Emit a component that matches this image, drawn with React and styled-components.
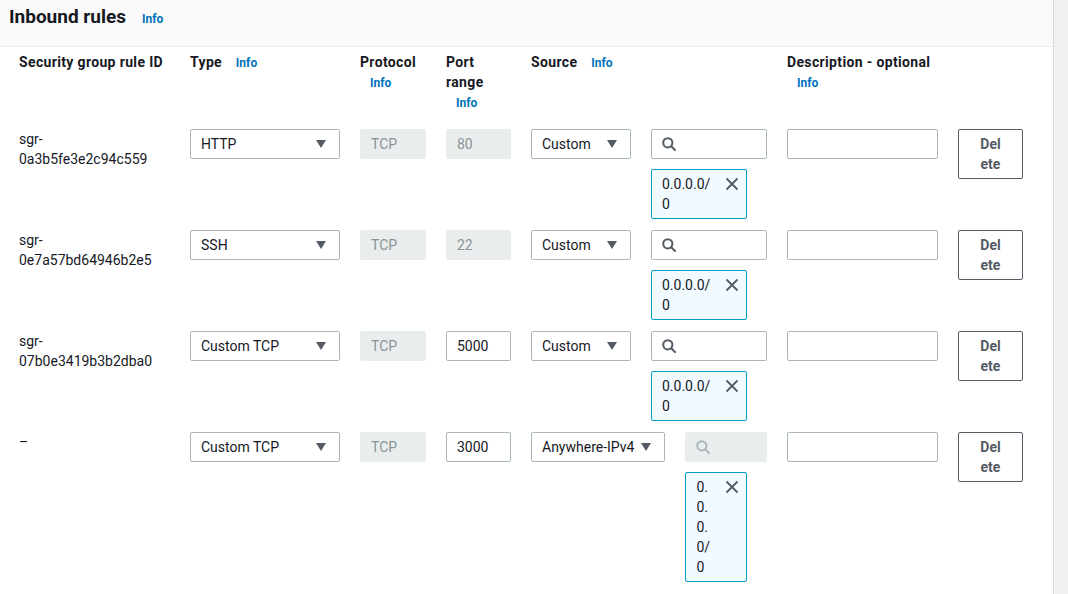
import React from "react";
import styled, { createGlobalStyle } from "styled-components";

const GlobalStyle = createGlobalStyle`
  html, body {
    margin: 0;
    padding: 0;
    background: #fff;
  }
  body {
    font-family: Roboto, "Liberation Sans", Arial, sans-serif;
    font-size: 14px;
    line-height: 20px;
    color: #16191f;
  }
  * {
    box-sizing: border-box;
  }
`;

const Page = styled.div`
  display: flex;
  width: 1068px;
  height: 594px;
  overflow: hidden;
`;

const Main = styled.div`
  flex: 1;
  min-width: 0;
`;

const Scrollbar = styled.div`
  width: 15px;
  flex-shrink: 0;
  background: #f1f1f1;
  border-left: 1px solid #d9d9d9;
`;

const PanelHeader = styled.div`
  height: 47px;
  padding: 6px 9px 0;
  display: flex;
  align-items: baseline;
  background: #fafafa;
  border-bottom: 1px solid #eaeded;
`;

const Heading = styled.h2`
  margin: 0;
  font-size: 19px;
  line-height: 22px;
  font-weight: 700;
`;

const InfoLink = styled.a`
  display: inline-block;
  margin-left: ${(p) => p.$gap ?? 10}px;
  font-size: 12px;
  font-weight: 700;
  letter-spacing: 0;
  color: #0073bb;
  text-decoration: none;
`;

const Table = styled.div`
  padding: 5px 19px 0;
`;

const Grid = styled.div`
  display: grid;
  grid-template-columns: 151px 150px 66px 65px 236px 151px 65px;
  column-gap: 20px;
  align-items: start;
`;

const HeaderRow = styled(Grid)`
  margin-bottom: 16px;
`;

const ColTitle = styled.div`
  font-weight: 700;
  letter-spacing: 0.35px;
`;

const Rows = styled.div`
  display: flex;
  flex-direction: column;
  gap: 11px;
`;

const RuleId = styled.div`
  line-height: 20px;
`;

const Select = styled.div`
  display: flex;
  align-items: center;
  justify-content: space-between;
  gap: 7px;
  height: 30px;
  min-width: ${(p) => p.$minWidth || 0}px;
  padding: 0 13px 0 10px;
  flex-shrink: 0;
  white-space: nowrap;
  background: #fff;
  border: 1px solid #aab7b8;
  border-radius: 2px;
`;

const Field = styled.div`
  display: flex;
  align-items: center;
  gap: 8px;
  height: 30px;
  padding: 0 10px;
  background: ${(p) => (p.$disabled ? "#eaeded" : "#fff")};
  color: ${(p) => (p.$disabled ? "#879596" : "#16191f")};
  border: 1px solid ${(p) => (p.$disabled ? "#eaeded" : "#aab7b8")};
  border-radius: 2px;
`;

const SourceCell = styled.div`
  display: flex;
  align-items: flex-start;
  gap: 20px;
`;

const SearchCol = styled.div`
  flex: 1;
  min-width: 0;
  display: flex;
  flex-direction: column;
  gap: 10px;
`;

const Token = styled.div`
  margin-right: 20px;
  display: flex;
  align-items: flex-start;
  gap: 11px;
  padding: 4px 6px 4px 10px;
  background: #f1faff;
  border: 1px solid #00a1c9;
  border-radius: 2px;
`;

const TokenText = styled.span`
  flex: 1;
  min-width: 0;
  word-break: break-all;
`;

const Dismiss = styled.span`
  display: flex;
  align-items: center;
  height: 20px;
  flex-shrink: 0;
`;

const DeleteButton = styled.button`
  width: 65px;
  padding: 4px 20px;
  background: #fff;
  border: 1px solid #545b64;
  border-radius: 2px;
  color: #545b64;
  font-family: Roboto, "Liberation Sans", Arial, sans-serif;
  font-size: 14px;
  font-weight: 700;
  line-height: 20px;
  text-align: center;
  word-break: break-all;
`;

const Caret = () => (
  <svg width="10" height="8" viewBox="0 0 10 8">
    <polygon points="0,0 10,0 5,8" fill="#545b64" />
  </svg>
);

const SearchIcon = ({ color }) => (
  <svg width="14" height="14" viewBox="0 0 14 14" fill="none">
    <circle cx="5.8" cy="5.8" r="4.6" stroke={color} strokeWidth="2" />
    <line x1="9.2" y1="9.2" x2="13" y2="13" stroke={color} strokeWidth="2" strokeLinecap="round" />
  </svg>
);

const CloseIcon = () => (
  <svg width="16" height="16" viewBox="0 0 16 16" fill="none">
    <path d="M2.5 2.5l11 11M13.5 2.5l-11 11" stroke="#545b64" strokeWidth="1.8" />
  </svg>
);

const rules = [
  { id: ["sgr-", "0a3b5fe3e2c94c559"], type: "HTTP", port: "80", portLocked: true, source: "Custom" },
  { id: ["sgr-", "0e7a57bd64946b2e5"], type: "SSH", port: "22", portLocked: true, source: "Custom" },
  { id: ["sgr-", "07b0e3419b3b2dba0"], type: "Custom TCP", port: "5000", source: "Custom" },
  { id: ["–"], type: "Custom TCP", port: "3000", source: "Anywhere-IPv4", searchLocked: true },
];

function RuleRow({ rule }) {
  return (
    <Grid>
      <RuleId>
        {rule.id[0]}
        {rule.id[1] && (
          <>
            <wbr />
            {rule.id[1]}
          </>
        )}
      </RuleId>
      <Select>
        <span>{rule.type}</span>
        <Caret />
      </Select>
      <Field $disabled>TCP</Field>
      <Field $disabled={rule.portLocked}>{rule.port}</Field>
      <SourceCell>
        <Select $minWidth={rule.searchLocked ? 0 : 100}>
          <span>{rule.source}</span>
          <Caret />
        </Select>
        <SearchCol>
          <Field $disabled={rule.searchLocked}>
            <SearchIcon color={rule.searchLocked ? "#aab7b8" : "#545b64"} />
          </Field>
          <Token>
            <TokenText>0.0.0.0/0</TokenText>
            <Dismiss>
              <CloseIcon />
            </Dismiss>
          </Token>
        </SearchCol>
      </SourceCell>
      <Field />
      <DeleteButton>Delete</DeleteButton>
    </Grid>
  );
}

export default function App() {
  return (
    <Page>
      <GlobalStyle />
      <Main>
        <PanelHeader>
          <Heading>Inbound rules</Heading>
          <InfoLink $gap={16}>Info</InfoLink>
        </PanelHeader>
        <Table>
          <HeaderRow>
            <ColTitle>Security group rule ID</ColTitle>
            <ColTitle>
              Type <InfoLink>Info</InfoLink>
            </ColTitle>
            <ColTitle>
              Protocol <InfoLink>Info</InfoLink>
            </ColTitle>
            <ColTitle>
              Port range <InfoLink>Info</InfoLink>
            </ColTitle>
            <ColTitle>
              Source <InfoLink>Info</InfoLink>
            </ColTitle>
            <ColTitle>
              Description - optional <InfoLink>Info</InfoLink>
            </ColTitle>
            <div />
          </HeaderRow>
          <Rows>
            {rules.map((rule) => (
              <RuleRow key={rule.id.join("")} rule={rule} />
            ))}
          </Rows>
        </Table>
      </Main>
      <Scrollbar />
    </Page>
  );
}
